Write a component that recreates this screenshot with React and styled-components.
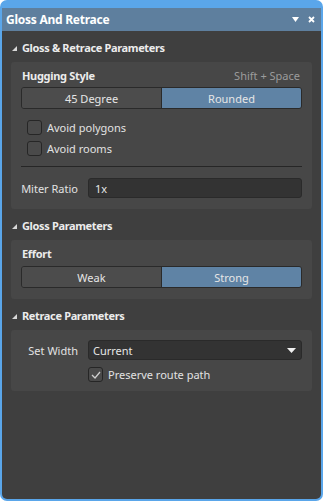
import React from "react";
import styled, { createGlobalStyle } from "styled-components";

const Global = createGlobalStyle`
  html, body { margin: 0; padding: 0; background: #ffffff; }
  body { font-family: "Noto Sans", "Open Sans", sans-serif; }
  * { box-sizing: border-box; }
`;

const Frame = styled.div`
  width: 323px;
  height: 501px;
  background: #5aa6ea;
  border-radius: 7px;
  padding: 8px 2px 2px 2px;
  display: flex;
  flex-direction: column;
`;

const Inner = styled.div`
  flex: 1;
  display: flex;
  flex-direction: column;
  background: #3f3f3f;
  border-radius: 0 0 5px 5px;
  overflow: hidden;
`;

const TitleBar = styled.div`
  height: 23px;
  background: #5e7f9e;
  display: flex;
  align-items: center;
  padding: 0 6px 0 4px;
  color: #ffffff;
`;

const Title = styled.div`
  flex: 1;
  font-size: 12px;
  font-weight: 700;
  letter-spacing: -0.25px;
`;

const TitleIcons = styled.div`
  display: flex;
  align-items: center;
  gap: 9px;
`;

const Body = styled.div`
  padding: 0 9px;
  display: flex;
  flex-direction: column;
`;

const SectionHeader = styled.div`
  display: flex;
  align-items: center;
  gap: 5px;
  padding: 10px 0 7px 1px;
  height: 31px;
  color: #ececec;
  font-size: 11px;
  font-weight: 700;
  line-height: 14px;
  letter-spacing: -0.35px;
`;

const Card = styled.div`
  background: #474747;
  border-radius: 3px;
  padding: ${(p) => p.$pad || "6px 10px 11px"};
  display: flex;
  flex-direction: column;
`;

const LabelRow = styled.div`
  height: 16px;
  display: flex;
  align-items: center;
  justify-content: space-between;
  font-size: 11px;
  line-height: 16px;
  padding-left: 1px;
`;

const BoldLabel = styled.span`
  color: #ececec;
  font-weight: 700;
  letter-spacing: -0.3px;
`;

const Shortcut = styled.span`
  color: #9c9c9c;
  padding-right: 2px;
`;

const Segmented = styled.div`
  margin-top: ${(p) => p.$mt || "3px"};
  height: 22px;
  display: flex;
  border: 1px solid #2a2a2a;
  border-radius: 3px;
  overflow: hidden;
`;

const Segment = styled.div`
  flex: 1;
  display: flex;
  align-items: center;
  justify-content: center;
  font-size: 11px;
  color: #e6e6e6;
  background: ${(p) => (p.$active ? "#5f83a5" : "#4c4c4c")};
  & + & {
    border-left: 1px solid #2a2a2a;
  }
`;

const CheckList = styled.div`
  margin-top: 11px;
  padding-left: 6px;
  display: flex;
  flex-direction: column;
  gap: 6px;
`;

const CheckRow = styled.label`
  display: flex;
  align-items: center;
  gap: 5px;
  height: 15px;
  font-size: 11px;
  color: #e2e2e2;
`;

const Box = styled.span`
  width: 15px;
  height: 15px;
  border: 1px solid #262626;
  border-radius: 3px;
  background: #4a4a4a;
  display: flex;
  align-items: center;
  justify-content: center;
  flex: none;
`;

const Separator = styled.div`
  margin-top: 10px;
  height: 1px;
  background: #262626;
`;

const FieldRow = styled.div`
  margin-top: ${(p) => p.$mt || "0"};
  display: grid;
  grid-template-columns: 57px 1fr;
  column-gap: 10px;
  align-items: center;
`;

const FieldLabel = styled.div`
  text-align: right;
  font-size: 11px;
  color: #e2e2e2;
`;

const Input = styled.div`
  height: 20px;
  background: #333333;
  border: 1px solid #2a2a2a;
  border-radius: 3px;
  display: flex;
  align-items: center;
  padding: 0 6px;
  font-size: 11px;
  color: #e6e6e6;
`;

const Select = styled(Input)`
  justify-content: space-between;
  padding: 0 5px 0 4px;
`;

const Spacer = styled.div``;

const Tri = () => (
  <svg width="5" height="5" viewBox="0 0 5 5">
    <polygon points="5,0 5,5 0,5" fill="#d8d8d8" />
  </svg>
);

const Check = () => (
  <svg width="10" height="8" viewBox="0 0 10 8">
    <polyline points="1,4 4,7 9,1" fill="none" stroke="#cfcfcf" strokeWidth="1.3" />
  </svg>
);

export default function App() {
  return (
    <>
      <Global />
      <Frame>
        <Inner>
          <TitleBar>
            <Title>Gloss And Retrace</Title>
            <TitleIcons>
              <svg width="7" height="5" viewBox="0 0 7 5">
                <polygon points="0,0 7,0 3.5,5" fill="#ffffff" />
              </svg>
              <svg width="7" height="7" viewBox="0 0 7 7">
                <path d="M1 1 L6 6 M6 1 L1 6" stroke="#ffffff" strokeWidth="1.8" />
              </svg>
            </TitleIcons>
          </TitleBar>
          <Body>
            <SectionHeader>
              <Tri />
              Gloss &amp; Retrace Parameters
            </SectionHeader>
            <Card>
              <LabelRow>
                <BoldLabel>Hugging Style</BoldLabel>
                <Shortcut>Shift + Space</Shortcut>
              </LabelRow>
              <Segmented>
                <Segment>45 Degree</Segment>
                <Segment $active>Rounded</Segment>
              </Segmented>
              <CheckList>
                <CheckRow>
                  <Box />
                  Avoid polygons
                </CheckRow>
                <CheckRow>
                  <Box />
                  Avoid rooms
                </CheckRow>
              </CheckList>
              <Separator />
              <FieldRow $mt="11px">
                <FieldLabel>Miter Ratio</FieldLabel>
                <Input>1x</Input>
              </FieldRow>
            </Card>

            <SectionHeader>
              <Tri />
              Gloss Parameters
            </SectionHeader>
            <Card>
              <LabelRow>
                <BoldLabel>Effort</BoldLabel>
              </LabelRow>
              <Segmented $mt="4px">
                <Segment>Weak</Segment>
                <Segment $active>Strong</Segment>
              </Segmented>
            </Card>

            <SectionHeader>
              <Tri />
              Retrace Parameters
            </SectionHeader>
            <Card $pad="10px 10px 9px">
              <FieldRow>
                <FieldLabel>Set Width</FieldLabel>
                <Select>
                  <span>Current</span>
                  <svg width="9" height="5" viewBox="0 0 9 5">
                    <polygon points="0,0 9,0 4.5,5" fill="#f0f0f0" />
                  </svg>
                </Select>
              </FieldRow>
              <FieldRow $mt="7px">
                <Spacer />
                <CheckRow>
                  <Box>
                    <Check />
                  </Box>
                  Preserve route path
                </CheckRow>
              </FieldRow>
            </Card>
          </Body>
        </Inner>
      </Frame>
    </>
  );
}
